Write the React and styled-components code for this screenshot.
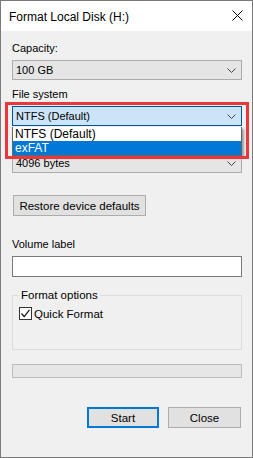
import React from 'react'
import styled, { createGlobalStyle } from 'styled-components'

const GlobalStyle = createGlobalStyle`
  html, body {
    margin: 0;
    padding: 0;
    background: #f0f0f0;
  }
  body {
    font-family: "Liberation Sans", Arial, sans-serif;
    font-size: 11px;
    color: #000;
  }
`

const Chevron = () => (
  <svg width="9" height="5" viewBox="0 0 9 5">
    <path d="M0.5 0.5 L4.5 4.5 L8.5 0.5" fill="none" stroke="#444" strokeWidth="1" />
  </svg>
)

const CloseIcon = () => (
  <svg width="11" height="11" viewBox="0 0 11 11">
    <path d="M0.5 0.5 L10.5 10.5 M10.5 0.5 L0.5 10.5" stroke="#000" strokeWidth="1" />
  </svg>
)

const Check = () => (
  <svg width="11" height="11" viewBox="0 0 11 11">
    <path d="M1.5 5.5 L4.2 8.5 L9.5 1.8" fill="none" stroke="#111" strokeWidth="1.2" />
  </svg>
)

const App = () => {
  return (
    <>
      <GlobalStyle />
      <Window>
        <TitleBar>
          <Title>Format Local Disk (H:)</Title>
          <CloseButton><CloseIcon /></CloseButton>
        </TitleBar>
        <Body>
          <Label $top={9}>Capacity:</Label>
          <Combo>
            <span>100 GB</span>
            <Chevron />
          </Combo>

          <Label $top={6}>File system</Label>
          <Field>
            <Combo $focused>
              <span>NTFS (Default)</span>
              <Chevron />
            </Combo>
            <List>
              <Option>NTFS (Default)</Option>
              <Option $selected>exFAT</Option>
            </List>
            <Highlight />
          </Field>

          {/* covered by the open list */}
          <Label $top={7} $hidden>Allocation unit size</Label>
          <Combo>
            <span>4096 bytes</span>
            <Chevron />
          </Combo>

          <Button $top={22} $width={133}>Restore device defaults</Button>

          <Label $top={20}>Volume label</Label>
          <Input />

          <Group>
            <Legend>Format options</Legend>
            <CheckRow>
              <CheckBox><Check /></CheckBox>
              <span>Quick Format</span>
            </CheckRow>
          </Group>

          <Progress />

          <Footer>
            <Button $width={72} $primary>Start</Button>
            <Button $width={73}>Close</Button>
          </Footer>
        </Body>
      </Window>
    </>
  )
}

const Window = styled.div`
  width: 253px;
  height: 458px;
  box-sizing: border-box;
  border: 1px solid #7a7a7a;
  background: #f0f0f0;
  display: flex;
  flex-direction: column;
  overflow: hidden;
`

const TitleBar = styled.div`
  height: 30px;
  background: #fff;
  display: flex;
  align-items: center;
  justify-content: space-between;
  padding: 0 9px 0 8px;
  flex-shrink: 0;
`

const Title = styled.div`
  font-size: 12px;
  color: #000;
  padding-top: 1px;
`

const CloseButton = styled.div`
  display: flex;
  align-items: center;
  margin-top: -1px;
`

const Body = styled.div`
  flex: 1;
  display: flex;
  flex-direction: column;
  padding: 0 10px 0 11px;
`

const Label = styled.div`
  margin-top: ${p => p.$top || 0}px;
  height: 16px;
  line-height: 16px;
  margin-bottom: 4px;
  visibility: ${p => (p.$hidden ? 'hidden' : 'visible')};
`

const Combo = styled.div`
  height: 20px;
  box-sizing: border-box;
  border: 1px solid ${p => (p.$focused ? '#005499' : '#acacac')};
  background: ${p => (p.$focused ? '#cce4f7' : '#e5e5e5')};
  display: flex;
  align-items: center;
  justify-content: space-between;
  padding: 0 5px 0 3px;
  font-size: 11px;
`

const Field = styled.div`
  position: relative;
`

const List = styled.div`
  position: absolute;
  left: 0;
  right: 0;
  top: 21px;
  background: #fff;
  border: 1px solid #646464;
  border-top: none;
  box-shadow: 2px 2px 2px rgba(0, 0, 0, 0.35);
  z-index: 2;
`

const Option = styled.div`
  height: 14px;
  line-height: 14px;
  padding: 0 2px;
  font-size: 12px;
  background: ${p => (p.$selected ? '#0078d7' : '#fff')};
  color: ${p => (p.$selected ? '#fff' : '#000')};
`

const Highlight = styled.div`
  position: absolute;
  left: -7px;
  right: -7px;
  top: -4px;
  height: 51px;
  border: 3px solid #e8383d;
  z-index: 3;
  pointer-events: none;
`

const Button = styled.div`
  margin-top: ${p => p.$top || 0}px;
  width: ${p => p.$width}px;
  height: 21px;
  box-sizing: border-box;
  background: #e1e1e1;
  border: ${p => (p.$primary ? '2px solid #0078d7' : '1px solid #adadad')};
  display: flex;
  align-items: center;
  justify-content: center;
  font-size: 11.5px;
  margin-left: ${p => (p.$top ? '1px' : '0')};
`

const Input = styled.div`
  height: 21px;
  box-sizing: border-box;
  background: #fff;
  border: 1px solid #7a7a7a;
`

const Group = styled.fieldset`
  margin: 11px 0 0;
  padding: 5px 6px 0;
  height: 62px;
  box-sizing: border-box;
  border: 1px solid #dcdcdc;
  min-width: 0;
`

const Legend = styled.legend`
  padding: 0 2px;
  margin-left: 0;
  line-height: 14px;
  font-size: 11.5px;
`

const CheckRow = styled.div`
  display: flex;
  align-items: center;
  gap: 2px;
  font-size: 11.5px;
`

const CheckBox = styled.div`
  width: 13px;
  height: 13px;
  box-sizing: border-box;
  border: 1px solid #333;
  background: #fff;
  display: flex;
  align-items: center;
  justify-content: center;
`

const Progress = styled.div`
  margin-top: 14px;
  height: 14px;
  box-sizing: border-box;
  background: #e6e6e6;
  border: 1px solid #bcbcbc;
`

const Footer = styled.div`
  margin-top: 29px;
  display: flex;
  justify-content: flex-end;
  gap: 9px;
  padding-right: 1px;
`

export default App
